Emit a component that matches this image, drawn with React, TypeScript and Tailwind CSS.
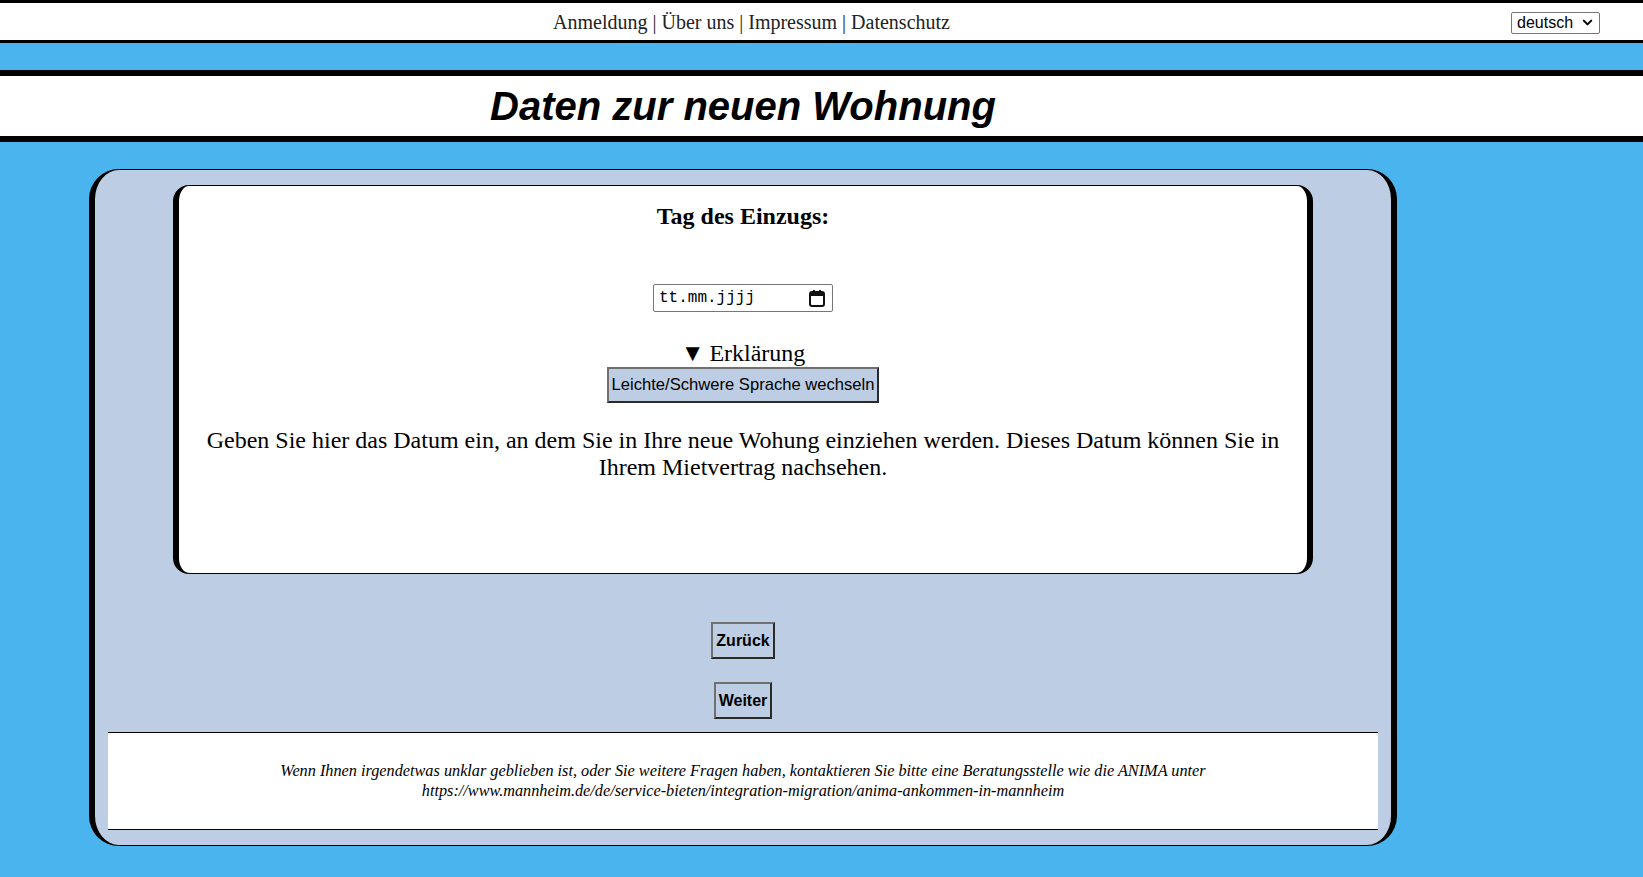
import { ChevronDown } from "lucide-react";

const serif = "font-['Liberation_Serif',serif]";
const sans = "font-['Liberation_Sans',Arial,sans-serif]";

function CalendarIcon() {
  return (
    <svg width="16" height="17" viewBox="0 0 16 17" className="shrink-0">
      <rect x="1" y="2" width="14" height="14" rx="2" fill="none" stroke="#111" strokeWidth="2" />
      <rect x="1" y="2" width="14" height="4" fill="#111" />
      <rect x="4" y="0" width="2" height="3" fill="#111" />
      <rect x="10" y="0" width="2" height="3" fill="#111" />
    </svg>
  );
}

function NavBar() {
  return (
    <header className="border-y-[3px] border-black bg-white">
      <div className="flex h-[37px] items-center">
        <nav className={`flex-1 pr-[8px] text-center text-[20px] text-[#222] ${serif}`}>
          Anmeldung | Über uns | Impressum | Datenschutz
        </nav>
        <div
          className={`mr-[43px] mt-[2px] flex h-[22px] w-[89px] items-center justify-between rounded-[2px] border border-[#767676] bg-white pl-[5px] pr-[4px] text-[16px] text-black ${sans}`}
        >
          <span>deutsch</span>
          <ChevronDown size={15} strokeWidth={3.2} />
        </div>
      </div>
    </header>
  );
}

function OutlineButton({ label, bold }: { label: string; bold?: boolean }) {
  return (
    <button
      className={`border-2 border-b-[#2a2a2a] border-l-[#707070] border-r-[#2a2a2a] border-t-[#707070] bg-[#bdcde3] px-[3px] text-black ${sans} ${
        bold ? "h-[37px] text-[16px] font-bold" : "h-[36px] text-[16.6px]"
      }`}
    >
      {label}
    </button>
  );
}

export default function App() {
  return (
    <div className="min-h-screen bg-[#4ab4ee] pb-[31px]">
      <NavBar />
      <div className="h-[27px]" />

      <div className="border-y-[6px] border-black bg-white">
        <div className="ml-[89px] flex h-[60px] w-[1308px] items-center justify-center">
          <h1 className={`text-[40px] font-bold italic text-black ${sans}`}>
            Daten zur neuen Wohnung
          </h1>
        </div>
      </div>

      <main className="ml-[89px] mt-[27px] w-[1308px] rounded-[30px] border-x-[6px] border-y border-black bg-[#bdcde3] pt-[15px] pb-[15px]">
        <section
          className={`mx-[78px] flex h-[389px] flex-col items-center rounded-[16px] border-x-[6px] border-y border-black bg-white pt-[16px] text-black ${serif}`}
        >
          <h2 className="text-[24px] font-bold leading-[28px]">Tag des Einzugs:</h2>

          <div className="mt-[54px] flex h-[28px] w-[180px] items-center justify-between rounded-[2px] border border-[#767676] pl-[5px] pr-[7px]">
            <span className="font-['Liberation_Mono',monospace] text-[16px] text-black">
              tt.mm.jjjj
            </span>
            <CalendarIcon />
          </div>

          <div className="mt-[27px] text-[24px] leading-[28px]">
            <span className="mr-[5px] text-[24px]">▼</span>Erklärung
          </div>
          <OutlineButton label="Leichte/Schwere Sprache wechseln" />

          <p className="mt-[24px] px-[20px] text-center text-[24px] leading-[27px]">
            Geben Sie hier das Datum ein, an dem Sie in Ihre neue Wohung einziehen werden. Dieses
            Datum können Sie in Ihrem Mietvertrag nachsehen.
          </p>
        </section>

        <div className="mt-[48px] flex flex-col items-center gap-[23px]">
          <OutlineButton label="Zurück" bold />
          <OutlineButton label="Weiter" bold />
        </div>

        <footer
          className={`mx-[13px] mt-[13px] flex h-[98px] items-center justify-center border-y border-black bg-white px-[80px] text-center text-[16.25px] italic leading-[20px] text-black ${serif}`}
        >
          <p>
            Wenn Ihnen irgendetwas unklar geblieben ist, oder Sie weitere Fragen haben, kontaktieren
            Sie bitte eine Beratungsstelle wie die ANIMA unter
            <br />
            https://www.mannheim.de/de/service-bieten/integration-migration/anima-ankommen-in-mannheim
          </p>
        </footer>
      </main>
    </div>
  );
}
